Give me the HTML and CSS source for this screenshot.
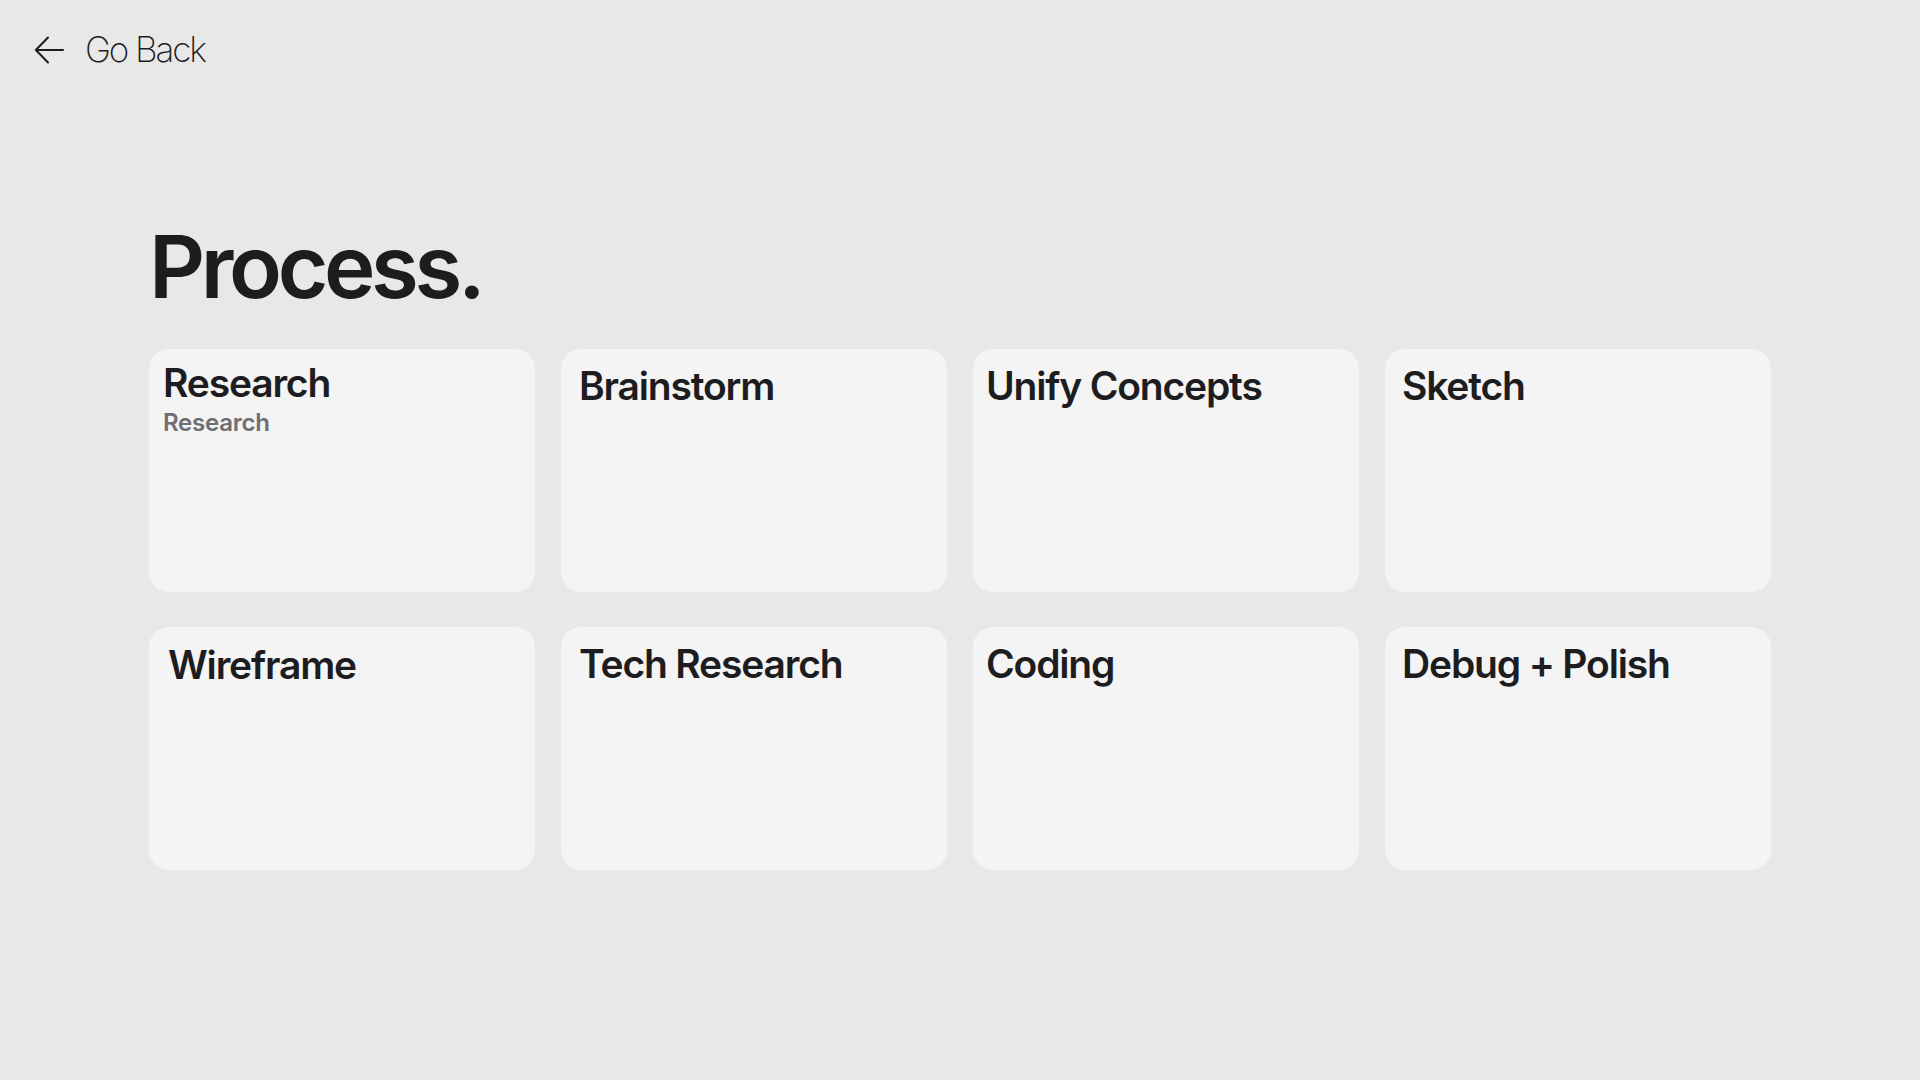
FILE: index.html
```html
<!DOCTYPE html>
<html lang="en">
<head>
<meta charset="utf-8">
<title>Process.</title>
<link rel="stylesheet" href="styles.css">
</head>
<body>
<header class="topbar">
  <a class="back" href="#">
    <svg class="back-icon" width="30" height="28" viewBox="0 0 30 28" aria-hidden="true">
      <path d="M29 14 H2 M14 1.5 L1.8 14 L14 26.5" fill="none" stroke="#1d1d1f" stroke-width="2" stroke-linecap="round" stroke-linejoin="round"/>
    </svg>
    <span class="back-label">Go Back</span>
  </a>
</header>
<main class="content">
  <h1 class="page-title">Process.</h1>
  <section class="grid">
    <article class="card card-first">
      <h2 class="card-title">Research</h2>
      <p class="card-sub">Research</p>
    </article>
    <article class="card card-b"><h2 class="card-title">Brainstorm</h2></article>
    <article class="card card-c"><h2 class="card-title">Unify Concepts</h2></article>
    <article class="card card-d"><h2 class="card-title">Sketch</h2></article>
    <article class="card card-w"><h2 class="card-title">Wireframe</h2></article>
    <article class="card card-b"><h2 class="card-title">Tech Research</h2></article>
    <article class="card card-c"><h2 class="card-title">Coding</h2></article>
    <article class="card card-d"><h2 class="card-title">Debug + Polish</h2></article>
  </section>
</main>
</body>
</html>
```
FILE: styles.css
```css
* { box-sizing: border-box; }
html, body {
  margin: 0;
  padding: 0;
  background: #e8e8e8;
  width: 1920px;
  height: 1080px;
  overflow: hidden;
  font-family: "Inter", "Liberation Sans", sans-serif;
  color: #1d1d1f;
}
.topbar {
  padding: 32px 0 0 34px;
}
.back {
  display: inline-flex;
  align-items: center;
  gap: 21px;
  color: #1d1d1f;
  text-decoration: none;
}
.back-icon { display: block; }
.back-label {
  font-size: 35px;
  font-weight: 200;
  line-height: 1;
  letter-spacing: -0.06em;
}
.content {
  padding: 0 0 0 149px;
}
.page-title {
  margin: 155px 0 0 0;
  font-size: 87px;
  font-weight: 600;
  line-height: 1;
  letter-spacing: -0.05em;
}
.grid {
  margin-top: 39px;
  display: grid;
  grid-template-columns: repeat(4, 386px);
  grid-auto-rows: 243px;
  column-gap: 26px;
  row-gap: 35px;
}
.card {
  background: #f4f4f4;
  border-radius: 20px;
  padding: 17px 18px;
}
.card-title {
  margin: 0;
  font-size: 39px;
  font-weight: 600;
  line-height: 1;
  letter-spacing: -0.03em;
}
.card-first { padding: 14px 14px; }
.card-b { padding-left: 18px; }
.card-c { padding-left: 13px; }
.card-d { padding-left: 17px; }
.card-w { padding-left: 19px; padding-top: 18px; }
.card-sub {
  margin: 9px 0 0 0;
  font-size: 24px;
  font-weight: 600;
  line-height: 1;
  color: #6e6e73;
  letter-spacing: -0.01em;
}
```
